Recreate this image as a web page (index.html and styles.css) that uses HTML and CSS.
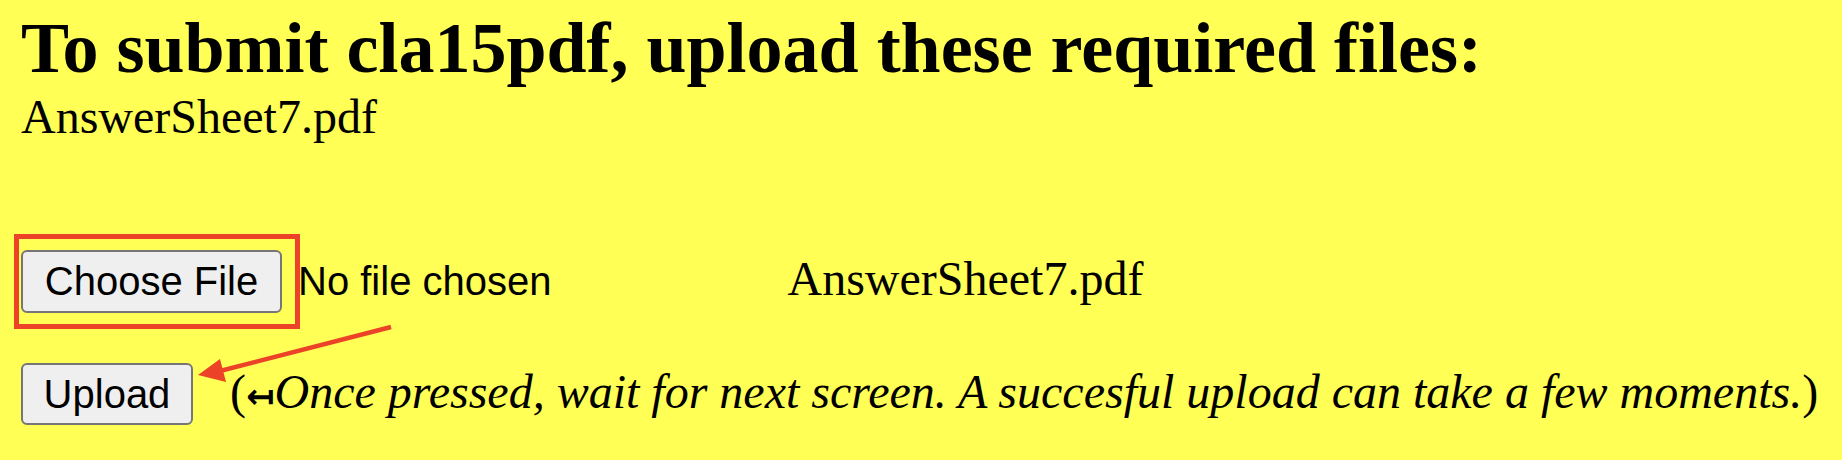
FILE: index.html
```html
<!DOCTYPE html>
<html lang="en">
<head>
<meta charset="utf-8">
<title>Upload required files</title>
<link rel="stylesheet" href="styles.css">
</head>
<body>
<main class="page">
  <h2 class="title">To submit cla15pdf, upload these required files:</h2>
  <p class="req">AnswerSheet7.pdf</p>

  <div class="file-row">
    <div class="picker">
      <span class="btn-wrap">
        <button class="btn btn-choose" type="button">Choose File</button>
        <span class="highlight"></span>
      </span>
      <span class="status">No file chosen</span>
    </div>
    <span class="fname">AnswerSheet7.pdf</span>
  </div>

  <div class="upload-row">
    <button class="btn btn-upload" type="button">Upload</button>
    <span class="note">(<span class="larrow">↤</span><i>Once pressed, wait for next screen. A succesful upload can take a few moments.</i>)</span>
  </div>

  <svg class="callout" width="1842" height="460" viewBox="0 0 1842 460" aria-hidden="true">
    <line x1="391" y1="327" x2="220" y2="371" stroke="#eb4228" stroke-width="4.5" stroke-linecap="butt"/>
    <polygon points="198,375 220,359 226,382" fill="#eb4228"/>
  </svg>
</main>
</body>
</html>
```

FILE: styles.css
```css
html, body {
  margin: 0;
  padding: 0;
  background: #ffff55;
}

body {
  font-family: "Liberation Serif", "Times New Roman", serif;
  color: #000;
  width: 1842px;
  height: 460px;
  overflow: hidden;
}

.page {
  position: relative;
  padding: 8px 0 0 21px;
  height: 452px;
}

.title {
  margin: 0;
  font-size: 72px;
  font-weight: bold;
  line-height: 80px;
  white-space: nowrap;
}

.req {
  margin: 1px 0 0;
  font-size: 48px;
  line-height: 56px;
}

.file-row {
  margin-top: 105px;
  display: flex;
  align-items: baseline;
  column-gap: 236px;
}

.picker {
  display: flex;
  align-items: baseline;
  column-gap: 16px;
}

.btn-wrap {
  position: relative;
  display: inline-flex;
}

.btn {
  box-sizing: border-box;
  margin: 0;
  padding: 0;
  font-family: "Liberation Sans", Arial, sans-serif;
  font-size: 40px;
  color: #000;
  background: #efefef;
  border: 2px solid #767676;
  border-radius: 6px;
  text-align: center;
}

.btn-choose {
  width: 261px;
  height: 63px;
}

.btn-upload {
  width: 172px;
  height: 62px;
}

.highlight {
  position: absolute;
  left: -7px;
  top: -16px;
  width: 286px;
  height: 95px;
  box-sizing: border-box;
  border: 5px solid #eb4228;
  pointer-events: none;
}

.status {
  font-family: "Liberation Sans", Arial, sans-serif;
  font-size: 40px;
}

.fname {
  font-size: 48px;
}

.upload-row {
  margin-top: 50px;
  display: flex;
  align-items: baseline;
}

.note {
  margin-left: 37px;
  font-size: 48px;
  white-space: nowrap;
}

.larrow {
  font-family: "DejaVu Sans", sans-serif;
  font-size: 34px;
  font-weight: bold;
}

.note i {
  font-style: italic;
}

.callout {
  position: absolute;
  left: 0;
  top: 0;
  pointer-events: none;
}
```
